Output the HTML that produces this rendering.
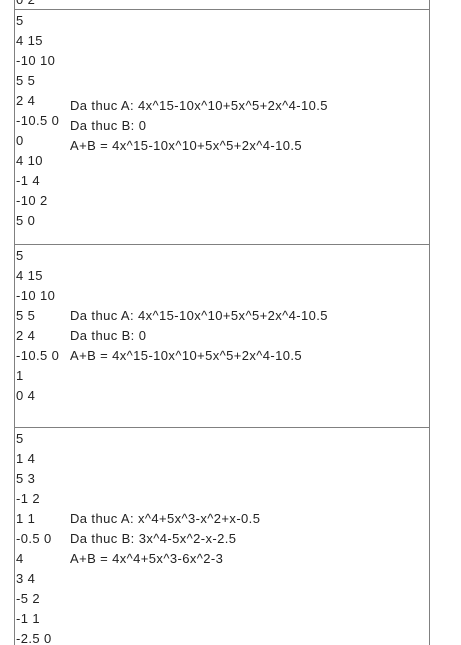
<!DOCTYPE html>
<html><head><meta charset="utf-8"><style>
html,body{margin:0;padding:0;background:#fff;width:461px;height:645px;overflow:hidden;}
body{font-family:"Liberation Sans",sans-serif;font-size:13px;color:#222;position:relative;letter-spacing:0.4px;}
.v{position:absolute;top:0;height:645px;width:1px;background:#808080;}
.h{position:absolute;left:14px;width:416px;height:1px;background:#808080;}
.c{position:absolute;left:16px;line-height:20px;white-space:pre;}
.r{position:absolute;left:70px;line-height:20px;white-space:pre;}
</style></head><body>
<div class="v" style="left:14px"></div>
<div class="v" style="left:429px"></div>
<div class="h" style="top:9px"></div>
<div class="h" style="top:244px"></div>
<div class="h" style="top:427px"></div>
<div class="c" style="top:-10px">0 2</div>
<div class="c" style="top:11px">5
4 15
-10 10
5 5
2 4
-10.5 0
0
4 10
-1 4
-10 2
5 0</div>
<div class="r" style="top:96px">Da thuc A: 4x^15-10x^10+5x^5+2x^4-10.5
Da thuc B: 0
A+B = 4x^15-10x^10+5x^5+2x^4-10.5</div>
<div class="c" style="top:246px">5
4 15
-10 10
5 5
2 4
-10.5 0
1
0 4</div>
<div class="r" style="top:306px">Da thuc A: 4x^15-10x^10+5x^5+2x^4-10.5
Da thuc B: 0
A+B = 4x^15-10x^10+5x^5+2x^4-10.5</div>
<div class="c" style="top:429px">5
1 4
5 3
-1 2
1 1
-0.5 0
4
3 4
-5 2
-1 1
-2.5 0</div>
<div class="r" style="top:509px">Da thuc A: x^4+5x^3-x^2+x-0.5
Da thuc B: 3x^4-5x^2-x-2.5
A+B = 4x^4+5x^3-6x^2-3</div>
</body></html>
